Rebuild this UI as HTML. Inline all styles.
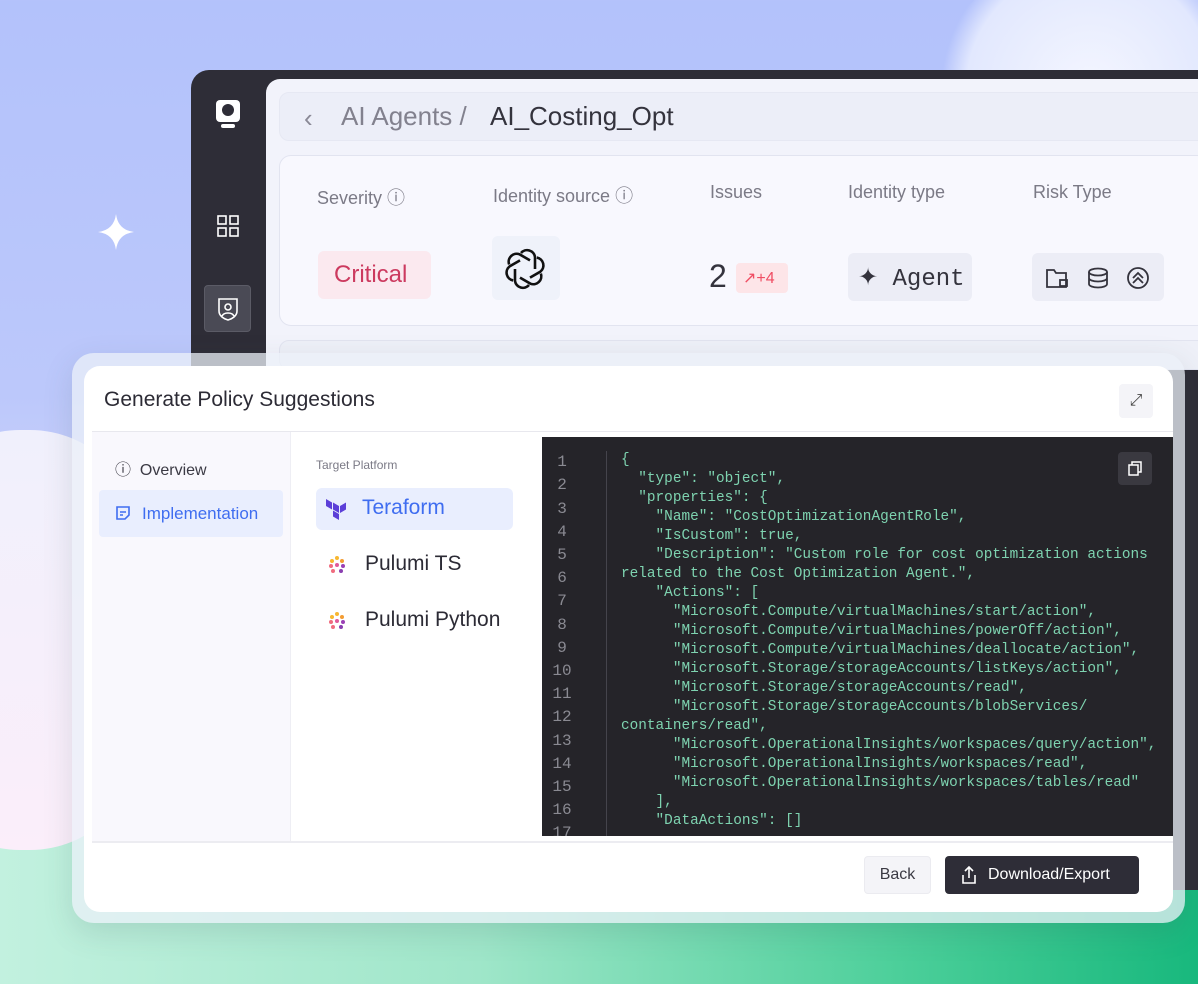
<!DOCTYPE html>
<html><head><meta charset="utf-8"><style>
*{margin:0;padding:0;box-sizing:border-box}
body{width:1198px;height:984px;overflow:hidden;position:relative;font-family:"Liberation Sans",sans-serif;background:linear-gradient(180deg,#b3c2fb 0%,#bcc8fb 40%,#dcdcf8 70%,#f4eaf6 82%);}
.abs{position:absolute}
.green{left:0;top:835px;width:1198px;height:149px;background:linear-gradient(90deg,#c2f1df 0%,#9fe6c9 40%,#4ccf9a 75%,#18b87d 100%);}
.cloudTR{left:930px;top:-40px;width:320px;height:260px;border-radius:50%;background:radial-gradient(circle at 50% 50%,#f4f6ff 0%,#e2e8fe 60%,rgba(210,220,253,0) 72%);}
.cloudL{left:-90px;top:430px;width:230px;height:420px;border-radius:110px;background:linear-gradient(180deg,#f0f0fc,#fbeefa);}
.app{left:191px;top:70px;width:1020px;height:820px;background:#2e2d37;border-radius:18px 0 0 0;}
.inner{left:266px;top:79px;width:940px;height:290px;background:#f2f3fb;border-radius:14px 0 0 0;}
.crumb{left:279px;top:92px;width:930px;height:49px;background:#eceef8;border-radius:10px;border:1px solid #e6e8f3}
.card{left:279px;top:155px;width:930px;height:171px;background:#f8f8fe;border-radius:12px;border:1px solid #e2e4f0}
.bar2{left:279px;top:340px;width:930px;height:30px;background:#eef0f8;border-radius:10px;border:1px solid #e2e4f0}
.lbl{color:#7b7a86;font-size:18px}
.frame{left:72px;top:353px;width:1113px;height:570px;background:rgba(235,240,248,.75);border-radius:22px;box-shadow:0 10px 30px rgba(60,80,90,.15)}
.modal{left:84px;top:366px;width:1089px;height:546px;background:#fff;border-radius:16px;overflow:hidden}
.code{left:542px;top:437px;width:631px;height:399px;background:#252429;overflow:hidden}
.ln{position:absolute;left:0;width:40px;text-align:center;color:#8a8a92;font:16px "Liberation Mono",monospace}
pre{position:absolute;left:79px;top:14px;font:14.4px/19px "Liberation Mono",monospace;color:#7ed3b0}
</style></head><body>
<div class="abs green"></div>
<div class="abs cloudTR"></div>
<div class="abs cloudL"></div>
<svg class="abs" style="left:96px;top:212px" width="40" height="40" viewBox="0 0 40 40"><path d="M20 2 Q22 18 38 20 Q22 22 20 38 Q18 22 2 20 Q18 18 20 2Z" fill="#fff"/></svg>
<div class="abs app"></div>
<!-- sidebar icons -->
<svg class="abs" style="left:214px;top:98px" width="28" height="32" viewBox="0 0 28 32"><rect x="2" y="2" width="24" height="22" rx="4" fill="#fff"/><circle cx="14" cy="12" r="6" fill="#2e2d37"/><rect x="7" y="26" width="14" height="4" rx="2" fill="#fff"/></svg>
<svg class="abs" style="left:216px;top:214px" width="24" height="24" viewBox="0 0 24 24" fill="none" stroke="#fff" stroke-width="1.6"><rect x="2" y="2" width="8" height="8"/><rect x="14" y="2" width="8" height="8"/><rect x="2" y="14" width="8" height="8"/><rect x="14" y="14" width="8" height="8"/></svg>
<div class="abs" style="left:204px;top:285px;width:47px;height:47px;background:#4a4a55;border-radius:4px;border:1px solid #5b5b66"></div>
<svg class="abs" style="left:216px;top:296px" width="24" height="26" viewBox="0 0 24 26" fill="none" stroke="#fff" stroke-width="1.6"><path d="M3 3h18v12c0 5-5 8-9 9-4-1-9-4-9-9z"/><circle cx="12" cy="11" r="3"/><path d="M6 20c2-4 10-4 12 0"/></svg>
<div class="abs inner"></div>
<div class="abs crumb"></div>
<div class="abs" style="left:304px;top:103px;font-size:26px;color:#8a8996">‹</div>
<div class="abs" style="left:341px;top:101px;font-size:26px;color:#82818e">AI Agents /</div>
<div class="abs" style="left:490px;top:101px;font-size:26px;color:#34333d">AI_Costing_Opt</div>
<div class="abs card"></div>
<div class="abs lbl" style="left:317px;top:184px">Severity ⓘ</div>
<div class="abs lbl" style="left:493px;top:182px">Identity source ⓘ</div>
<div class="abs lbl" style="left:710px;top:182px">Issues</div>
<div class="abs lbl" style="left:848px;top:182px">Identity type</div>
<div class="abs lbl" style="left:1033px;top:182px">Risk Type</div>
<div class="abs" style="left:318px;top:251px;width:113px;height:48px;background:#fbe9ef;border-radius:6px;color:#cc3a5f;font-size:24px;padding:10px 0 0 16px">Critical</div>
<div class="abs" style="left:492px;top:236px;width:68px;height:64px;background:#eff2fa;border-radius:6px"></div>
<svg class="abs" style="left:504px;top:248px" width="42" height="42" viewBox="0 0 42 42" fill="none" stroke="#111" stroke-width="2.6"><g transform="translate(21 21)"><path id="p" d="M-4 -16 a8 8 0 0 1 14 4 v12"/><use href="#p" transform="rotate(60)"/><use href="#p" transform="rotate(120)"/><use href="#p" transform="rotate(180)"/><use href="#p" transform="rotate(240)"/><use href="#p" transform="rotate(300)"/></g></svg>
<div class="abs" style="left:709px;top:258px;font-size:32px;color:#34333d">2</div>
<div class="abs" style="left:736px;top:263px;width:52px;height:30px;background:#fde5e8;border-radius:4px;color:#f04d63;font-size:16px;padding:5px 0 0 7px">↗+4</div>
<div class="abs" style="left:848px;top:253px;width:124px;height:48px;background:#ecedf6;border-radius:6px;font:24px 'Liberation Mono',monospace;color:#34333d;padding:10px 0 0 10px">✦ Agent</div>
<div class="abs" style="left:1032px;top:253px;width:132px;height:48px;background:#ecedf6;border-radius:6px"></div>
<svg class="abs" style="left:1045px;top:265px" width="110" height="26" viewBox="0 0 110 26" fill="none" stroke="#34333d" stroke-width="1.8"><path d="M2 5h7l2 3h10v14H2z"/><rect x="15" y="15" width="7" height="6"/><ellipse cx="53" cy="7" rx="9" ry="3.5"/><path d="M44 7v12c0 2 4 3.5 9 3.5s9-1.5 9-3.5V7M44 13c0 2 4 3.5 9 3.5s9-1.5 9-3.5"/><circle cx="93" cy="13" r="10"/><path d="M88 13l5-5 5 5M88 18l5-5 5 5"/></svg>
<div class="abs bar2"></div>
<div class="abs frame"></div>
<div class="abs modal">
 <div class="abs" style="left:20px;top:22px;font-size:21px;color:#2c2b35">Generate Policy Suggestions</div>
 <div class="abs" style="left:1035px;top:18px;width:34px;height:34px;background:#f4f4f8;border-radius:4px;color:#444;font-size:16px;text-align:center;line-height:34px">⤢</div>
 <div class="abs" style="left:8px;top:65px;width:1081px;height:1px;background:#e8e8ee"></div>
 <div class="abs" style="left:8px;top:66px;width:199px;height:410px;background:#f9f8fd;border-right:1px solid #eeeef4"></div>
 <div class="abs" style="left:31px;top:90px;font-size:16px;color:#3b3a44">ⓘ&nbsp; Overview</div>
 <div class="abs" style="left:15px;top:124px;width:184px;height:47px;background:#e9eefe;border-radius:4px"></div>
 <svg class="abs" style="left:31px;top:139px" width="16" height="16" viewBox="0 0 16 16" fill="none" stroke="#3f6df0" stroke-width="1.6"><path d="M2 2h12v8l-4 4H2zM5 7h6M5 10h3"/></svg>
 <div class="abs" style="left:58px;top:138px;font-size:17px;color:#3f6df0">Implementation</div>
 <div class="abs" style="left:232px;top:92px;font-size:12px;color:#7b7a86">Target Platform</div>
 <div class="abs" style="left:232px;top:122px;width:197px;height:42px;background:#e9eefe;border-radius:6px"></div>
 <svg class="abs" style="left:241px;top:132px" width="22" height="22" viewBox="0 0 22 22" fill="#5c3fd8"><path d="M1 1l6 3.5v7L1 8zM8 4.5l6 3.5v7l-6-3.5zM15 8l6-3.5v7L15 15zM8 12.5l6 3.5v6l-6-3.5z"/></svg>
 <div class="abs" style="left:278px;top:130px;font-size:21px;color:#3f6df0">Teraform</div>
 <svg class="abs" style="left:243px;top:189px" width="20" height="20" viewBox="0 0 20 20"><circle cx="10" cy="3" r="2" fill="#f7b731"/><circle cx="5" cy="6" r="2" fill="#f7b731"/><circle cx="15" cy="6" r="2" fill="#f39c32"/><circle cx="4" cy="11" r="2" fill="#f06c7f"/><circle cx="10" cy="10" r="2" fill="#e05a9a"/><circle cx="16" cy="11" r="2" fill="#9b40b5"/><circle cx="6" cy="16" r="2" fill="#f06c7f"/><circle cx="14" cy="16" r="2" fill="#8a3fb0"/></svg>
 <div class="abs" style="left:281px;top:186px;font-size:21px;color:#2c2b35">Pulumi TS</div>
 <svg class="abs" style="left:243px;top:245px" width="20" height="20" viewBox="0 0 20 20"><circle cx="10" cy="3" r="2" fill="#f7b731"/><circle cx="5" cy="6" r="2" fill="#f7b731"/><circle cx="15" cy="6" r="2" fill="#f39c32"/><circle cx="4" cy="11" r="2" fill="#f06c7f"/><circle cx="10" cy="10" r="2" fill="#e05a9a"/><circle cx="16" cy="11" r="2" fill="#9b40b5"/><circle cx="6" cy="16" r="2" fill="#f06c7f"/><circle cx="14" cy="16" r="2" fill="#8a3fb0"/></svg>
 <div class="abs" style="left:281px;top:242px;font-size:21px;color:#2c2b35">Pulumi Python</div>
 <div class="abs" style="left:8px;top:475px;width:1081px;height:2px;background:#ececf1"></div>
 <div class="abs" style="left:780px;top:490px;width:67px;height:38px;background:#f4f4f8;border:1px solid #ebebf0;border-radius:4px;font-size:16px;color:#3b3a44;text-align:center;line-height:36px">Back</div>
 <div class="abs" style="left:861px;top:490px;width:194px;height:38px;background:#2e2d37;border-radius:4px;font-size:16px;color:#fff;line-height:38px;padding-left:43px">Download/Export</div>
 <svg class="abs" style="left:877px;top:500px" width="16" height="18" viewBox="0 0 16 18" fill="none" stroke="#fff" stroke-width="1.6"><path d="M8 12V1M4 5l4-4 4 4M2 9v8h12V9"/></svg>
</div>
<div class="abs code">
 <div class="abs" style="left:64px;top:14px;width:1px;height:400px;background:#45444c"></div>
 <div class="ln" style="top:16px">1</div><div class="ln" style="top:39px">2</div><div class="ln" style="top:63px">3</div><div class="ln" style="top:86px">4</div><div class="ln" style="top:109px">5</div><div class="ln" style="top:132px">6</div><div class="ln" style="top:155px">7</div><div class="ln" style="top:179px">8</div><div class="ln" style="top:202px">9</div><div class="ln" style="top:225px">10</div><div class="ln" style="top:248px">11</div><div class="ln" style="top:271px">12</div><div class="ln" style="top:295px">13</div><div class="ln" style="top:318px">14</div><div class="ln" style="top:341px">15</div><div class="ln" style="top:364px">16</div><div class="ln" style="top:387px">17</div>
 <div class="abs" style="left:576px;top:15px;width:34px;height:33px;background:#3a3940;border-radius:4px"></div>
 <svg class="abs" style="left:585px;top:23px" width="16" height="16" viewBox="0 0 16 16" fill="none" stroke="#fff" stroke-width="1.5"><rect x="2" y="5" width="9" height="10"/><path d="M5 5V2h9v10h-3"/></svg>
<pre>{
  "type": "object",
  "properties": {
    "Name": "CostOptimizationAgentRole",
    "IsCustom": true,
    "Description": "Custom role for cost optimization actions
related to the Cost Optimization Agent.",
    "Actions": [
      "Microsoft.Compute/virtualMachines/start/action",
      "Microsoft.Compute/virtualMachines/powerOff/action",
      "Microsoft.Compute/virtualMachines/deallocate/action",
      "Microsoft.Storage/storageAccounts/listKeys/action",
      "Microsoft.Storage/storageAccounts/read",
      "Microsoft.Storage/storageAccounts/blobServices/
containers/read",
      "Microsoft.OperationalInsights/workspaces/query/action",
      "Microsoft.OperationalInsights/workspaces/read",
      "Microsoft.OperationalInsights/workspaces/tables/read"
    ],
    "DataActions": []</pre>
</div>
</body></html>
